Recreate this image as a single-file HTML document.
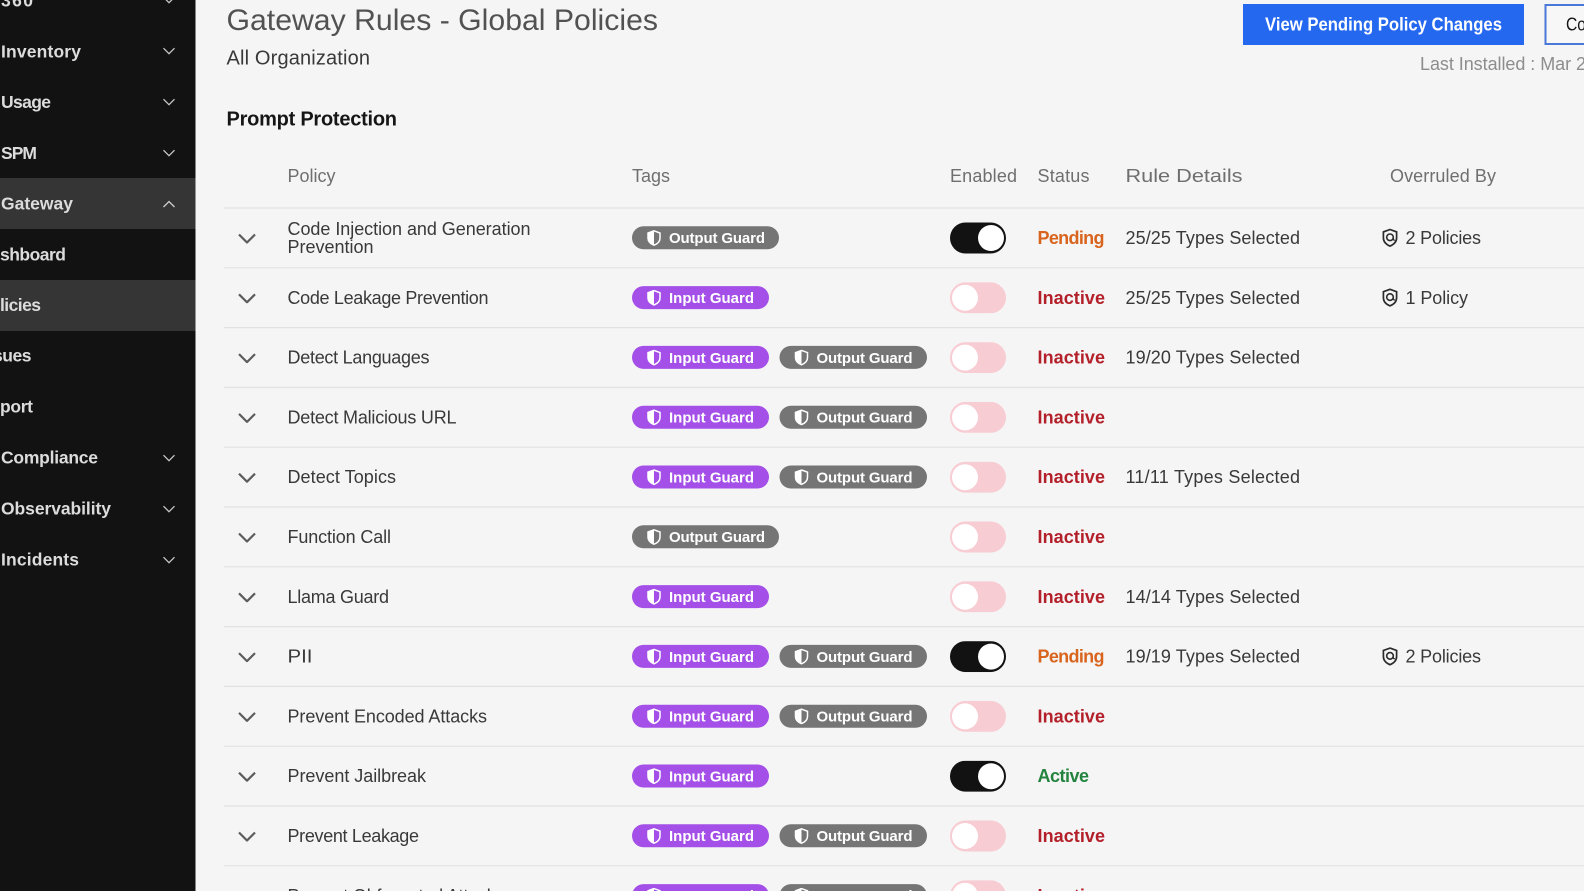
<!DOCTYPE html>
<html><head><meta charset="utf-8"><title>Gateway Rules - Global Policies</title>
<style>
html,body{margin:0;padding:0;width:1584px;height:891px;overflow:hidden;background:#f4f4f4}
svg{display:block;filter:blur(.35px)}
text{font-family:"Liberation Sans",sans-serif;font-size:18px;fill:#393939;white-space:pre;transform:translateY(-.5px)}
.nav{fill:#dcdcdc;font-weight:700;font-size:17.5px}
.h{fill:#6f6f6f}
.t{fill:#fff;font-weight:700;font-size:15px;transform:translateY(-.8px)}
.p{fill:#d9641e;font-weight:700}
.i{fill:#b3202a;font-weight:700}
.a{fill:#24843f;font-weight:700}
.pu{fill:#a450e8}
.gr{fill:#757575}
</style></head><body>
<svg width="1584" height="891" viewBox="0 0 1584 891" xmlns="http://www.w3.org/2000/svg">
<defs>
<symbol id="s" viewBox="0 0 14 16" width="14" height="16"><path d="M7 .8 13 3v5.2c0 3.3-2.500 5.600-6 7-3.500-1.400-6-3.700-6-7V3z" fill="none" stroke="#fff" stroke-width="1.500"/><path d="M7 1 1.200 3.100v5.100c0 3.200 2.400 5.500 5.800 6.800z" fill="#fff"/></symbol>
<symbol id="o" viewBox="0 0 16 19" width="16" height="19"><path d="M8 1 14.600 3.400v6c0 3.800-2.800 6.600-6.600 8.200C4.200 16 1.400 13.200 1.400 9.400v-6z" fill="none" stroke="#2b2b2b" stroke-width="1.700"/><circle cx="8" cy="8.800" r="3.300" fill="none" stroke="#2b2b2b" stroke-width="1.600"/><path d="M11.300 8.800v1.400c0 1.300 1 1.800 1.600 1.100" fill="none" stroke="#2b2b2b" stroke-width="1.300"/></symbol>
<symbol id="c" viewBox="0 0 18 10" width="18" height="10"><path d="M1 1l8 8 8-8" fill="none" stroke="#5c5c5c" stroke-width="2.200"/></symbol>
<symbol id="d" viewBox="0 0 12 7" width="12" height="7"><path d="M.5.700l5.500 5.500L11.500.7" fill="none" stroke="#c6c6c6" stroke-width="1.300"/></symbol>
<symbol id="on" viewBox="0 0 56 31" width="56" height="31"><rect width="56" height="31" rx="15.500" fill="#121212"/><circle cx="41" cy="15.500" r="13" fill="#fff"/></symbol>
<symbol id="off" viewBox="0 0 56 31" width="56" height="31"><rect width="56" height="31" rx="15.500" fill="#f8ccd3"/><circle cx="15" cy="15.500" r="13" fill="#fff"/></symbol>
</defs>

<rect width="1584" height="891" fill="#f5f5f5"/>

<!-- sidebar -->
<rect width="195.500" height="891" fill="#121212"/>
<rect y="178" width="195.500" height="51" fill="#353535"/>
<rect y="280" width="195.500" height="51" fill="#353535"/>
<text class="nav" x="1" y="7" textLength="32">360</text><use href="#d" x="163" y="-3.500"/>
<text class="nav" x="1" y="58" textLength="80">Inventory</text><use href="#d" x="163" y="47.500"/>
<text class="nav" x="1" y="108.500" textLength="50">Usage</text><use href="#d" x="163" y="98.500"/>
<text class="nav" x="1" y="159.500" textLength="36">SPM</text><use href="#d" x="163" y="149.500"/>
<text class="nav" x="1" y="210" textLength="72">Gateway</text><path d="M163.500 207l5.500-5.500 5.500 5.500" fill="none" stroke="#d0d0d0" stroke-width="1.300"/>
<text class="nav" x="0" y="261" textLength="66">shboard</text>
<text class="nav" x="0" y="311.500" textLength="41">licies</text>
<text class="nav" x="-7" y="362" textLength="38.500">sues</text>
<text class="nav" x="0" y="413" textLength="33">port</text>
<text class="nav" x="1" y="464" textLength="97">Compliance</text><use href="#d" x="163" y="454.500"/>
<text class="nav" x="1" y="515" textLength="110">Observability</text><use href="#d" x="163" y="505.500"/>
<text class="nav" x="1" y="566" textLength="78">Incidents</text><use href="#d" x="163" y="556.500"/>

<!-- header -->
<text x="226.500" y="30.500" textLength="431.500" lengthAdjust="spacingAndGlyphs" style="font-size:29.500px;fill:#525252">Gateway Rules - Global Policies</text>
<text x="226.500" y="65" style="font-size:20px;fill:#393939" textLength="143.500">All Organization</text>
<text x="226.500" y="126" style="font-size:20px;font-weight:700;fill:#161616" textLength="170.500">Prompt Protection</text>
<rect x="1243" y="4" width="281" height="41" fill="#2468f0"/>
<text x="1265" y="31" style="fill:#fff;font-weight:700" textLength="237" lengthAdjust="spacingAndGlyphs">View Pending Policy Changes</text>
<rect x="1545.500" y="5" width="60" height="39" fill="#f7f7f7" stroke="#4a78d8" stroke-width="2"/>
<text x="1566" y="31" style="fill:#161616" textLength="20" lengthAdjust="spacingAndGlyphs">Co</text>
<text x="1420" y="70.500" style="fill:#8d8d8d" textLength="166">Last Installed : Mar 2</text>

<!-- table head -->
<text class="h" x="287.500" y="182.500" textLength="48">Policy</text>
<text class="h" x="632" y="182.500" textLength="38">Tags</text>
<text class="h" x="950" y="182.500" textLength="67">Enabled</text>
<text class="h" x="1037.500" y="182.500" textLength="52">Status</text>
<text class="h" x="1125.500" y="182.500" textLength="117" lengthAdjust="spacingAndGlyphs">Rule Details</text>
<text class="h" x="1390" y="182.500" textLength="106">Overruled By</text>

<g stroke="#e2e2e2" stroke-width="1.200">
<path d="M224 208H1584M224 267.800H1584M224 327.600H1584M224 387.400H1584M224 447.200H1584M224 507H1584M224 566.800H1584M224 626.600H1584M224 686.400H1584M224 746.200H1584M224 806H1584M224 865.800H1584"/>
</g>

<!-- row 1 -->
<g>
<use href="#c" x="238" y="233.500"/>
<text x="287.500" y="235.700" textLength="243">Code Injection and Generation</text>
<text x="287.500" y="253.300" textLength="86">Prevention</text>
<rect class="gr" x="632" y="226.300" width="147" height="23" rx="11.500"/><use href="#s" x="647" y="230"/><text class="t" x="669" y="244" textLength="96">Output Guard</text>
<use href="#on" x="950" y="222.500"/>
<text class="p" x="1037.500" y="244.500" textLength="67">Pending</text>
<text x="1125.500" y="244.500" textLength="174.500">25/25 Types Selected</text>
<use href="#o" x="1382" y="228.500"/><text x="1405.500" y="244.500" textLength="75.500">2 Policies</text>
</g>
<!-- row 2 -->
<g transform="translate(0,59.800)">
<use href="#c" x="238" y="233.500"/>
<text x="287.500" y="244.500" textLength="201">Code Leakage Prevention</text>
<rect class="pu" x="632" y="226.300" width="137" height="23" rx="11.500"/><use href="#s" x="647" y="230"/><text class="t" x="669" y="244" textLength="85">Input Guard</text>
<use href="#off" x="950" y="222.500"/>
<text class="i" x="1037.500" y="244.500" textLength="67.500">Inactive</text>
<text x="1125.500" y="244.500" textLength="174.500">25/25 Types Selected</text>
<use href="#o" x="1382" y="228.500"/><text x="1405.500" y="244.500" textLength="62.500">1 Policy</text>
</g>
<!-- row 3 -->
<g transform="translate(0,119.600)">
<use href="#c" x="238" y="233.500"/>
<text x="287.500" y="244.500" textLength="142">Detect Languages</text>
<rect class="pu" x="632" y="226.300" width="137" height="23" rx="11.500"/><use href="#s" x="647" y="230"/><text class="t" x="669" y="244" textLength="85">Input Guard</text>
<rect class="gr" x="779.500" y="226.300" width="147.500" height="23" rx="11.500"/><use href="#s" x="794.500" y="230"/><text class="t" x="816.500" y="244" textLength="96">Output Guard</text>
<use href="#off" x="950" y="222.500"/>
<text class="i" x="1037.500" y="244.500" textLength="67.500">Inactive</text>
<text x="1125.500" y="244.500" textLength="174.500">19/20 Types Selected</text>
</g>
<!-- row 4 -->
<g transform="translate(0,179.400)">
<use href="#c" x="238" y="233.500"/>
<text x="287.500" y="244.500" textLength="169">Detect Malicious URL</text>
<rect class="pu" x="632" y="226.300" width="137" height="23" rx="11.500"/><use href="#s" x="647" y="230"/><text class="t" x="669" y="244" textLength="85">Input Guard</text>
<rect class="gr" x="779.500" y="226.300" width="147.500" height="23" rx="11.500"/><use href="#s" x="794.500" y="230"/><text class="t" x="816.500" y="244" textLength="96">Output Guard</text>
<use href="#off" x="950" y="222.500"/>
<text class="i" x="1037.500" y="244.500" textLength="67.500">Inactive</text>
</g>
<!-- row 5 -->
<g transform="translate(0,239.200)">
<use href="#c" x="238" y="233.500"/>
<text x="287.500" y="244.500" textLength="108.500">Detect Topics</text>
<rect class="pu" x="632" y="226.300" width="137" height="23" rx="11.500"/><use href="#s" x="647" y="230"/><text class="t" x="669" y="244" textLength="85">Input Guard</text>
<rect class="gr" x="779.500" y="226.300" width="147.500" height="23" rx="11.500"/><use href="#s" x="794.500" y="230"/><text class="t" x="816.500" y="244" textLength="96">Output Guard</text>
<use href="#off" x="950" y="222.500"/>
<text class="i" x="1037.500" y="244.500" textLength="67.500">Inactive</text>
<text x="1125.500" y="244.500" textLength="174.500">11/11 Types Selected</text>
</g>
<!-- row 6 -->
<g transform="translate(0,299)">
<use href="#c" x="238" y="233.500"/>
<text x="287.500" y="244.500" textLength="103.500">Function Call</text>
<rect class="gr" x="632" y="226.300" width="147" height="23" rx="11.500"/><use href="#s" x="647" y="230"/><text class="t" x="669" y="244" textLength="96">Output Guard</text>
<use href="#off" x="950" y="222.500"/>
<text class="i" x="1037.500" y="244.500" textLength="67.500">Inactive</text>
</g>
<!-- row 7 -->
<g transform="translate(0,358.800)">
<use href="#c" x="238" y="233.500"/>
<text x="287.500" y="244.500" textLength="101.500">Llama Guard</text>
<rect class="pu" x="632" y="226.300" width="137" height="23" rx="11.500"/><use href="#s" x="647" y="230"/><text class="t" x="669" y="244" textLength="85">Input Guard</text>
<use href="#off" x="950" y="222.500"/>
<text class="i" x="1037.500" y="244.500" textLength="67.500">Inactive</text>
<text x="1125.500" y="244.500" textLength="174.500">14/14 Types Selected</text>
</g>
<!-- row 8 -->
<g transform="translate(0,418.600)">
<use href="#c" x="238" y="233.500"/>
<text x="287.500" y="244.500" textLength="25" lengthAdjust="spacingAndGlyphs">PII</text>
<rect class="pu" x="632" y="226.300" width="137" height="23" rx="11.500"/><use href="#s" x="647" y="230"/><text class="t" x="669" y="244" textLength="85">Input Guard</text>
<rect class="gr" x="779.500" y="226.300" width="147.500" height="23" rx="11.500"/><use href="#s" x="794.500" y="230"/><text class="t" x="816.500" y="244" textLength="96">Output Guard</text>
<use href="#on" x="950" y="222.500"/>
<text class="p" x="1037.500" y="244.500" textLength="67">Pending</text>
<text x="1125.500" y="244.500" textLength="174.500">19/19 Types Selected</text>
<use href="#o" x="1382" y="228.500"/><text x="1405.500" y="244.500" textLength="75.500">2 Policies</text>
</g>
<!-- row 9 -->
<g transform="translate(0,478.400)">
<use href="#c" x="238" y="233.500"/>
<text x="287.500" y="244.500" textLength="199.500">Prevent Encoded Attacks</text>
<rect class="pu" x="632" y="226.300" width="137" height="23" rx="11.500"/><use href="#s" x="647" y="230"/><text class="t" x="669" y="244" textLength="85">Input Guard</text>
<rect class="gr" x="779.500" y="226.300" width="147.500" height="23" rx="11.500"/><use href="#s" x="794.500" y="230"/><text class="t" x="816.500" y="244" textLength="96">Output Guard</text>
<use href="#off" x="950" y="222.500"/>
<text class="i" x="1037.500" y="244.500" textLength="67.500">Inactive</text>
</g>
<!-- row 10 -->
<g transform="translate(0,538.200)">
<use href="#c" x="238" y="233.500"/>
<text x="287.500" y="244.500" textLength="138.500">Prevent Jailbreak</text>
<rect class="pu" x="632" y="226.300" width="137" height="23" rx="11.500"/><use href="#s" x="647" y="230"/><text class="t" x="669" y="244" textLength="85">Input Guard</text>
<use href="#on" x="950" y="222.500"/>
<text class="a" x="1037.500" y="244.500" textLength="51.500">Active</text>
</g>
<!-- row 11 -->
<g transform="translate(0,598)">
<use href="#c" x="238" y="233.500"/>
<text x="287.500" y="244.500" textLength="131.500">Prevent Leakage</text>
<rect class="pu" x="632" y="226.300" width="137" height="23" rx="11.500"/><use href="#s" x="647" y="230"/><text class="t" x="669" y="244" textLength="85">Input Guard</text>
<rect class="gr" x="779.500" y="226.300" width="147.500" height="23" rx="11.500"/><use href="#s" x="794.500" y="230"/><text class="t" x="816.500" y="244" textLength="96">Output Guard</text>
<use href="#off" x="950" y="222.500"/>
<text class="i" x="1037.500" y="244.500" textLength="67.500">Inactive</text>
</g>
<!-- row 12 -->
<g transform="translate(0,657.800)">
<text x="287.500" y="244.500" textLength="217">Prevent Obfuscated Attacks</text>
<rect class="pu" x="632" y="226.300" width="137" height="23" rx="11.500"/><use href="#s" x="647" y="230"/><text class="t" x="669" y="244" textLength="85">Input Guard</text>
<rect class="gr" x="779.500" y="226.300" width="147.500" height="23" rx="11.500"/><use href="#s" x="794.500" y="230"/><text class="t" x="816.500" y="244" textLength="96">Output Guard</text>
<use href="#off" x="950" y="222.500"/>
<text class="i" x="1037.500" y="244.500" textLength="67.500">Inactive</text>
</g>
</svg>
</body></html>
